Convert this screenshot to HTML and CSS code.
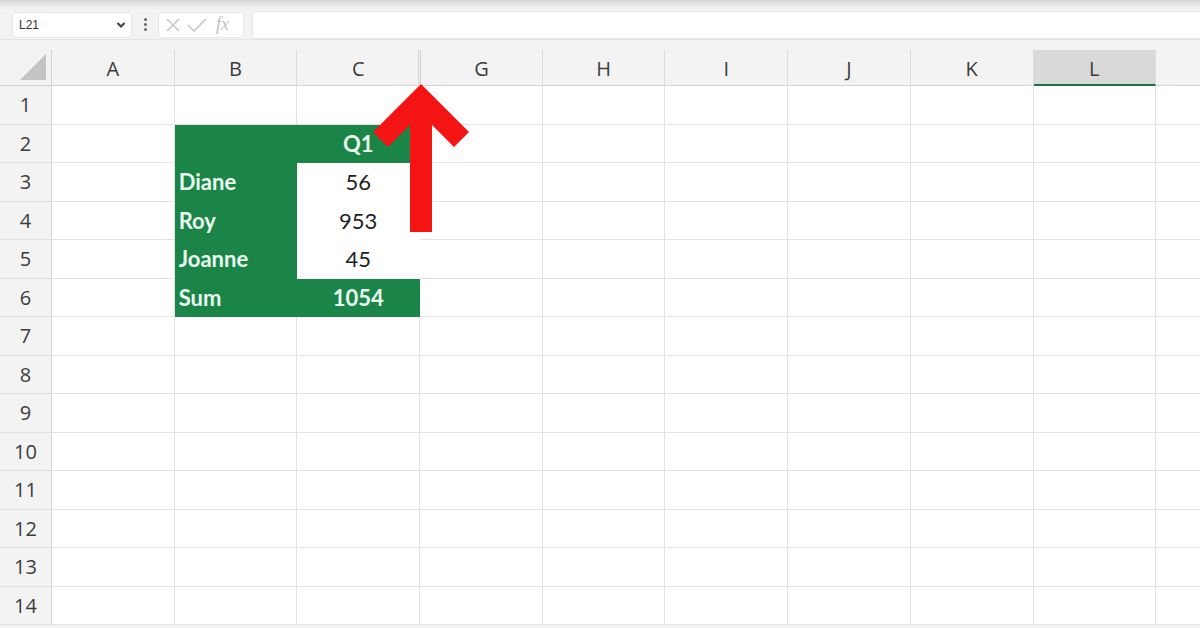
FILE: index.html
```html
<!DOCTYPE html>
<html>
<head>
<meta charset="utf-8">
<link rel="stylesheet" href="styles.css">
</head>
<body>
<div class="app">
  <div class="topstrip"></div>
  <div class="fbar">
    <div class="namebox"><span class="nb-text">L21</span>
      <svg class="chev" width="10" height="8" viewBox="0 0 10 8"><path d="M1.5 2 L5 5.5 L8.5 2" fill="none" stroke="#444" stroke-width="2.2"/></svg>
    </div>
    <div class="dots"><i></i><i></i><i></i></div>
    <div class="fxbox">
      <svg width="18" height="18" viewBox="0 0 18 18"><path d="M3 3 L15 15 M15 3 L3 15" stroke="#c9c9c9" stroke-width="1.6"/></svg>
      <svg width="22" height="18" viewBox="0 0 22 18"><path d="M2 9 L8 15 L20 3" fill="none" stroke="#c9c9c9" stroke-width="1.6"/></svg>
      <span class="fx">fx</span>
    </div>
    <div class="finput"></div>
  </div>
  <div class="sheet">
    <div class="corner"><svg width="30" height="28" viewBox="0 0 30 28"><path d="M28 1 L28 27 L2 27 Z" fill="#c4c4c4"/></svg></div>
    <div class="ch">A</div><div class="ch">B</div><div class="ch">C</div><div class="ch gap">G</div><div class="ch">H</div><div class="ch">I</div><div class="ch">J</div><div class="ch">K</div><div class="ch sel">L</div><div class="ch"></div>

    <div class="rh">1</div><div class="c"></div><div class="c"></div><div class="c"></div><div class="c"></div><div class="c"></div><div class="c"></div><div class="c"></div><div class="c"></div><div class="c"></div><div class="c"></div>
    <div class="rh">2</div><div class="c"></div><div class="c g"></div><div class="c g num">Q1</div><div class="c"></div><div class="c"></div><div class="c"></div><div class="c"></div><div class="c"></div><div class="c"></div><div class="c"></div>
    <div class="rh">3</div><div class="c"></div><div class="c g lbl">Diane</div><div class="c w num">56</div><div class="c"></div><div class="c"></div><div class="c"></div><div class="c"></div><div class="c"></div><div class="c"></div><div class="c"></div>
    <div class="rh">4</div><div class="c"></div><div class="c g lbl">Roy</div><div class="c w num">953</div><div class="c"></div><div class="c"></div><div class="c"></div><div class="c"></div><div class="c"></div><div class="c"></div><div class="c"></div>
    <div class="rh">5</div><div class="c"></div><div class="c g lbl">Joanne</div><div class="c w num">45</div><div class="c"></div><div class="c"></div><div class="c"></div><div class="c"></div><div class="c"></div><div class="c"></div><div class="c"></div>
    <div class="rh">6</div><div class="c"></div><div class="c g lbl">Sum</div><div class="c g num">1054</div><div class="c"></div><div class="c"></div><div class="c"></div><div class="c"></div><div class="c"></div><div class="c"></div><div class="c"></div>
    <div class="rh">7</div><div class="c"></div><div class="c"></div><div class="c"></div><div class="c"></div><div class="c"></div><div class="c"></div><div class="c"></div><div class="c"></div><div class="c"></div><div class="c"></div>
    <div class="rh">8</div><div class="c"></div><div class="c"></div><div class="c"></div><div class="c"></div><div class="c"></div><div class="c"></div><div class="c"></div><div class="c"></div><div class="c"></div><div class="c"></div>
    <div class="rh">9</div><div class="c"></div><div class="c"></div><div class="c"></div><div class="c"></div><div class="c"></div><div class="c"></div><div class="c"></div><div class="c"></div><div class="c"></div><div class="c"></div>
    <div class="rh">10</div><div class="c"></div><div class="c"></div><div class="c"></div><div class="c"></div><div class="c"></div><div class="c"></div><div class="c"></div><div class="c"></div><div class="c"></div><div class="c"></div>
    <div class="rh">11</div><div class="c"></div><div class="c"></div><div class="c"></div><div class="c"></div><div class="c"></div><div class="c"></div><div class="c"></div><div class="c"></div><div class="c"></div><div class="c"></div>
    <div class="rh">12</div><div class="c"></div><div class="c"></div><div class="c"></div><div class="c"></div><div class="c"></div><div class="c"></div><div class="c"></div><div class="c"></div><div class="c"></div><div class="c"></div>
    <div class="rh">13</div><div class="c"></div><div class="c"></div><div class="c"></div><div class="c"></div><div class="c"></div><div class="c"></div><div class="c"></div><div class="c"></div><div class="c"></div><div class="c"></div>
    <div class="rh">14</div><div class="c"></div><div class="c"></div><div class="c"></div><div class="c"></div><div class="c"></div><div class="c"></div><div class="c"></div><div class="c"></div><div class="c"></div><div class="c"></div>
  </div>
  <svg class="arrow" width="120" height="160" viewBox="0 0 120 160">
    <path d="M60 2 L108 50 L93 65 L71 43 L71 150 L49 150 L49 43 L27 65 L12 50 Z" fill="#f41414"/>
  </svg>
</div>
</body>
</html>
```

FILE: styles.css
```css
* { box-sizing: border-box; }
html, body { margin: 0; padding: 0; }
body {
  width: 1200px;
  height: 628px;
  overflow: hidden;
  background: #f3f3f3;
  font-family: "Open Sans", "Noto Sans", sans-serif;
}
.app {
  position: relative;
  width: 1200px;
  height: 628px;
  overflow: hidden;
}
.topstrip {
  height: 10px;
  background: linear-gradient(#d6d6d6, #ebebeb 60%, #f3f3f3);
}
.fbar {
  height: 30px;
  display: flex;
  align-items: center;
  padding: 2px 0 2px 12px;
  border-bottom: 1px solid #e4e4e4;
}
.namebox {
  width: 120px;
  height: 26px;
  background: #fff;
  border: 1px solid #e6e6e6;
  border-radius: 4px;
  display: flex;
  align-items: center;
  justify-content: space-between;
  padding: 0 5px 0 6px;
}
.nb-text { font-size: 12px; color: #333; font-family: "Liberation Sans", sans-serif; }
.chev { display: block; }
.dots {
  width: 26px;
  display: flex;
  flex-direction: column;
  align-items: center;
  gap: 2px;
}
.dots i { display: block; width: 3px; height: 3px; background: #666; border-radius: 50%; }
.fxbox {
  width: 86px;
  height: 26px;
  background: #fff;
  border: 1px solid #e8e8e8;
  border-radius: 4px;
  display: flex;
  align-items: center;
  gap: 4px;
  padding: 0 4px 0 5px;
}
.fx {
  font-family: "Liberation Serif", serif;
  font-style: italic;
  font-size: 18px;
  color: #c0c0c0;
  margin-left: 4px;
}
.finput {
  flex: 1;
  height: 28px;
  margin-left: 8px;
  background: #fff;
  border: 1px solid #e6e6e6;
  border-right: none;
  border-radius: 4px 0 0 4px;
}
.sheet {
  margin-top: 10px;
  display: grid;
  grid-template-columns: 52px repeat(10, 122.7px);
  grid-template-rows: 36px repeat(14, 38.5px);
}
.corner {
  border-right: 1px solid #d4d4d4;
  border-bottom: 1px solid #d4d4d4;
  display: flex;
  align-items: flex-end;
  justify-content: flex-end;
  padding: 0 3px 4px 0;
}
.corner svg { display: block; }
.ch {
  background: #f3f3f3;
  border-right: 1px solid #dcdcdc;
  border-bottom: 1px solid #d4d4d4;
  display: flex;
  align-items: center;
  justify-content: center;
  font-size: 20px;
  color: #3c3c3c;
  padding-top: 2px;
}
.ch.gap { border-left: 3px double #d0d0d0; margin-left: -2px; }
.ch.sel {
  background: #d9d9d9;
  border-bottom: 2px solid #1e7145;
}
.rh {
  background: #f3f3f3;
  border-right: 1px solid #d4d4d4;
  border-bottom: 1px solid #e2e2e2;
  display: flex;
  align-items: center;
  justify-content: center;
  font-size: 20px;
  color: #3c3c3c;
}
.c {
  background: #fff;
  border-right: 1px solid #e3e3e3;
  border-bottom: 1px solid #e3e3e3;
  display: flex;
  align-items: center;
  font-family: "Lato", "Open Sans", sans-serif;
  font-size: 22px;
  color: #222;
}
.c.g {
  background: #1b8548;
  border-color: #1b8548;
  color: #eafaf0;
  font-weight: 700;
}
.c.w { background: #fff; border-right-color: #fff; border-bottom-color: #fff; }
.lbl { padding-left: 4px; }
.num { justify-content: center; }
.arrow {
  position: absolute;
  left: 361px;
  top: 82px;
}
```
